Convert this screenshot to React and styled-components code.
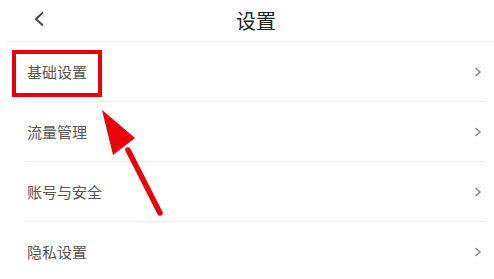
import React from 'react'
import styled, { createGlobalStyle } from 'styled-components'

const GlobalStyle = createGlobalStyle`
    html, body {
        margin: 0;
        padding: 0;
        background: #fff;
    }
    body {
        font-family: 'Noto Sans CJK SC', 'Noto Sans', sans-serif;
        overflow: hidden;
    }
`

const items = ['基础设置', '流量管理', '账号与安全', '隐私设置']

export default function App() {
    return (
        <Page>
            <GlobalStyle />
            <Header>
                <Back>
                    <svg width="12" height="16" viewBox="0 0 12 16">
                        <path d="M10 1.5 L3 8 L10 14.5" fill="none" stroke="#4a4a4a" strokeWidth="2" />
                    </svg>
                </Back>
                <Title>设置</Title>
            </Header>
            <List>
                {items.map(label => (
                    <Row key={label}>
                        <Label>{label}</Label>
                        <svg width="8" height="10" viewBox="0 0 8 10">
                            <path d="M1.5 1 L6 5 L1.5 9" fill="none" stroke="#8a8a8a" strokeWidth="1.6" />
                        </svg>
                    </Row>
                ))}
            </List>
            <Highlight />
            <Arrow width="80" height="120" viewBox="0 0 80 120">
                <line x1="30" y1="42" x2="62" y2="105" stroke="#e8000b" strokeWidth="5.5" strokeLinecap="round" />
                <polygon points="4,2 37,30 15,47" fill="#e8000b" />
            </Arrow>
        </Page>
    )
}

const Page = styled.div`
    position: relative;
    width: 494px;
    height: 279px;
    overflow: hidden;
`

const Header = styled.div`
    height: 41px;
    margin-left: 6px;
    padding-left: 27px;
    border-bottom: 1px solid #ececec;
    display: flex;
    align-items: center;
`

const Back = styled.div`
    display: flex;
    margin-top: -4px;
`

const Title = styled.div`
    flex: 1;
    padding-right: 27px;
    text-align: center;
    font-size: 20px;
    color: #222;
    line-height: 1;
`

const List = styled.div`
    margin: 0 8px 0 25px;
`

const Row = styled.div`
    height: 59px;
    border-bottom: 1px solid #ececec;
    display: flex;
    align-items: center;
    justify-content: space-between;
    padding: 0 4px 0 2px;
`

const Label = styled.span`
    font-size: 15px;
    color: #555;
`

const Highlight = styled.div`
    position: absolute;
    left: 12px;
    top: 50px;
    width: 82px;
    height: 39px;
    border: 4px solid #e8000b;
`

const Arrow = styled.svg`
    position: absolute;
    left: 98px;
    top: 108px;
`
